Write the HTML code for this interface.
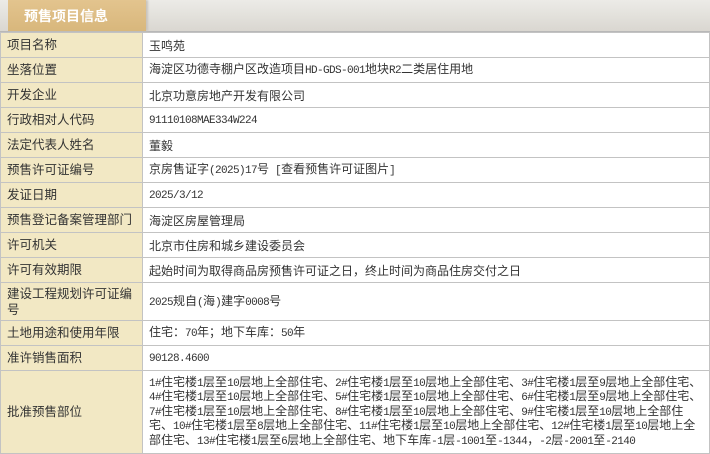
<!DOCTYPE html>
<html><head><meta charset="utf-8"><style>
body{margin:0;width:710px;height:453px;overflow:hidden;background:#fff;font-family:"Liberation Sans","Noto Sans CJK SC",sans-serif;font-size:12px;color:#333}
.top{height:31px;background:linear-gradient(#ecebe7,#dad7d1);position:relative;border-bottom:1px solid #b8b8b8}
.tab{position:absolute;left:8px;top:0;width:138px;height:31px;background:linear-gradient(#e3c48e,#d8b77c);color:#fff;font-weight:bold;font-size:14px;line-height:32px;padding-left:16px;box-sizing:border-box;box-shadow:2px 0 2px #c8c3bb}
table{border-collapse:collapse;width:710px;table-layout:fixed}
td{border:1px solid #c3c3c3;padding:0 6px;height:24px;line-height:13px;vertical-align:middle}
td.l{background:#f2e8c4;width:129px;font-size:12.5px}
td.r{font-size:12px;font-family:"Noto Sans CJK SC",sans-serif}
.m{font-family:"Liberation Mono",monospace;font-size:11px;letter-spacing:-0.6px}
</style></head><body>
<div class="top"><div class="tab">预售项目信息</div></div>
<table>
<tr><td class="l">项目名称</td><td class="r">玉鸣苑</td></tr>
<tr><td class="l">坐落位置</td><td class="r">海淀区功德寺棚户区改造项目<span class="m">HD-GDS-001</span>地块<span class="m">R2</span>二类居住用地</td></tr>
<tr><td class="l">开发企业</td><td class="r">北京功意房地产开发有限公司</td></tr>
<tr><td class="l">行政相对人代码</td><td class="r"><span class="m">91110108MAE334W224</span></td></tr>
<tr><td class="l">法定代表人姓名</td><td class="r">董毅</td></tr>
<tr><td class="l">预售许可证编号</td><td class="r">京房售证字<span class="m">(2025)17</span>号<span class="m"> [</span>查看预售许可证图片<span class="m">]</span></td></tr>
<tr><td class="l">发证日期</td><td class="r"><span class="m">2025/3/12</span></td></tr>
<tr><td class="l">预售登记备案管理部门</td><td class="r">海淀区房屋管理局</td></tr>
<tr><td class="l">许可机关</td><td class="r">北京市住房和城乡建设委员会</td></tr>
<tr><td class="l">许可有效期限</td><td class="r">起始时间为取得商品房预售许可证之日，终止时间为商品住房交付之日</td></tr>
<tr><td class="l" style="height:37px;line-height:16px">建设工程规划许可证编号</td><td class="r"><span class="m">2025</span>规自<span class="m">(</span>海<span class="m">)</span>建字<span class="m">0008</span>号</td></tr>
<tr><td class="l">土地用途和使用年限</td><td class="r">住宅：<span class="m">70</span>年；地下车库：<span class="m">50</span>年</td></tr>
<tr><td class="l">准许销售面积</td><td class="r"><span class="m">90128.4600</span></td></tr>
<tr><td class="l" style="height:82px">批准预售部位</td><td class="r" style="line-height:12.5px;padding:2px 6px"><span class="m">1#</span>住宅楼<span class="m">1</span>层至<span class="m">10</span>层地上全部住宅、<span class="m">2#</span>住宅楼<span class="m">1</span>层至<span class="m">10</span>层地上全部住宅、<span class="m">3#</span>住宅楼<span class="m">1</span>层至<span class="m">9</span>层地上全部住宅、<span class="m">4#</span>住宅楼<span class="m">1</span>层至<span class="m">10</span>层地上全部住宅、<span class="m">5#</span>住宅楼<span class="m">1</span>层至<span class="m">10</span>层地上全部住宅、<span class="m">6#</span>住宅楼<span class="m">1</span>层至<span class="m">9</span>层地上全部住宅、<span class="m">7#</span>住宅楼<span class="m">1</span>层至<span class="m">10</span>层地上全部住宅、<span class="m">8#</span>住宅楼<span class="m">1</span>层至<span class="m">10</span>层地上全部住宅、<span class="m">9#</span>住宅楼<span class="m">1</span>层至<span class="m">10</span>层地上全部住宅、<span class="m">10#</span>住宅楼<span class="m">1</span>层至<span class="m">8</span>层地上全部住宅、<span class="m">11#</span>住宅楼<span class="m">1</span>层至<span class="m">10</span>层地上全部住宅、<span class="m">12#</span>住宅楼<span class="m">1</span>层至<span class="m">10</span>层地上全部住宅、<span class="m">13#</span>住宅楼<span class="m">1</span>层至<span class="m">6</span>层地上全部住宅、地下车库<span class="m">-1</span>层<span class="m">-1001</span>至<span class="m">-1344</span>，<span class="m">-2</span>层<span class="m">-2001</span>至<span class="m">-2140</span></td></tr>
</table>
</body></html>
